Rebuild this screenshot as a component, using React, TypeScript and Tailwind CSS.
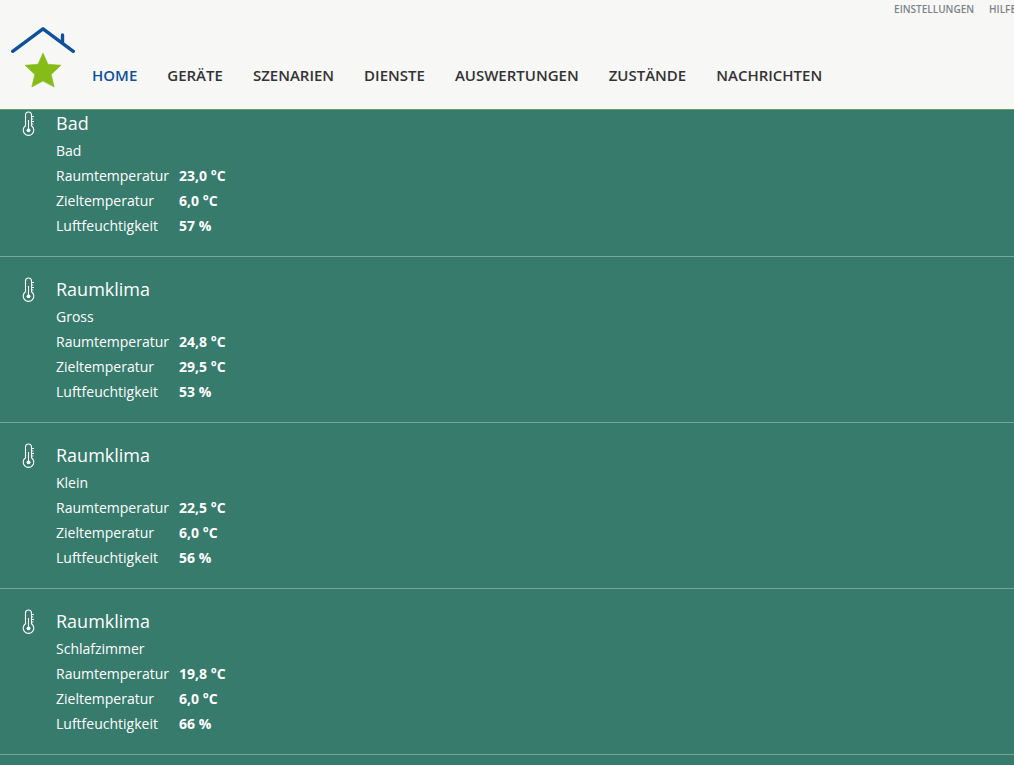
interface Room {
  id: string
  title: string
  room: string
  temperature: string
  target: string
  humidity: string
}

const navItems = [
  'Home',
  'Geräte',
  'Szenarien',
  'Dienste',
  'Auswertungen',
  'Zustände',
  'Nachrichten',
]

const rooms: Room[] = [
  { id: 'bad', title: 'Bad', room: 'Bad', temperature: '23,0 °C', target: '6,0 °C', humidity: '57 %' },
  { id: 'gross', title: 'Raumklima', room: 'Gross', temperature: '24,8 °C', target: '29,5 °C', humidity: '53 %' },
  { id: 'klein', title: 'Raumklima', room: 'Klein', temperature: '22,5 °C', target: '6,0 °C', humidity: '56 %' },
  { id: 'schlafzimmer', title: 'Raumklima', room: 'Schlafzimmer', temperature: '19,8 °C', target: '6,0 °C', humidity: '66 %' },
]

function Logo() {
  return (
    <svg width="64" height="62" viewBox="0 0 64 62" aria-hidden="true">
      <path
        d="M1.700 25.300 32 2.800l30.300 22.500M51.500 9v8"
        fill="none"
        stroke="#0f509b"
        strokeWidth="3.400"
        strokeLinecap="round"
        strokeLinejoin="round"
      />
      <path
        d="M32 27 37 38.300 50 39.200 40.200 48.500 43.200 61 32 55 20.800 61 23.800 48.500 14 39.200 27 38.300z"
        fill="#86bc17"
        stroke="#86bc17"
        strokeWidth=".6"
        strokeLinejoin="round"
      />
    </svg>
  )
}

function Thermometer() {
  return (
    <svg width="14" height="26" viewBox="0 0 14 26" fill="none" stroke="#fff" aria-hidden="true">
      <path d="M3.500 14.700V4a3 3 0 0 1 6 0v10.700a5.300 5.300 0 1 1-6 0z" strokeWidth="1.100" />
      <path d="M6.500 9v9" strokeWidth="1.100" />
      <circle cx="6.500" cy="19.300" r="1.900" fill="#fff" stroke="none" />
      <path d="M9.500 5.500H12M9.500 8h1.800M9.500 10.500H12M9.500 13h1.800" strokeWidth="1" />
    </svg>
  )
}

function RoomRow({ room }: { room: Room }) {
  const values = [
    ['Raumtemperatur', room.temperature],
    ['Zieltemperatur', room.target],
    ['Luftfeuchtigkeit', room.humidity],
  ]

  return (
    <li className="flex border-b border-[#76a698] pt-[17px] pb-[18px]">
      <div className="w-14 shrink-0 pt-[3px] pl-[22px]">
        <Thermometer />
      </div>
      <div>
        <h2 className="text-[18px] leading-[30px] font-medium">{room.title}</h2>
        <p className="text-[14px] leading-[25px] font-medium">{room.room}</p>
        <table className="text-left text-[14px] leading-[25px]">
          <tbody>
            {values.map(([label, value]) => (
              <tr key={label}>
                <th scope="row" className="w-[123px] p-0 font-medium">{label}</th>
                <td className="p-0 font-bold">{value}</td>
              </tr>
            ))}
          </tbody>
        </table>
      </div>
    </li>
  )
}

export default function App() {
  return (
    <div className="min-h-screen overflow-x-hidden bg-[#367b6b] font-['Open_Sans',sans-serif] text-white">
      <header className="relative z-10 border-b border-[#6a9a6c] bg-[#f7f7f6]">
        {/* Last link runs past the right edge */}
        <div className="-mr-0.5 flex h-[18px] justify-end gap-[15px] text-[10px] leading-[18px] font-semibold text-[#7c8388] uppercase">
          <a href="#einstellungen">Einstellungen</a>
          <a href="#hilfe">Hilfe</a>
        </div>
        <div className="flex h-[91px] items-start pl-[11px]">
          <a href="#home" aria-label="Home" className="mr-[17px] shrink-0 pt-2">
            <Logo />
          </a>
          <nav className="flex gap-[30px] pt-[47px] text-[15px] leading-[20px] font-semibold text-[#333] uppercase">
            {navItems.map((item, index) => (
              <a key={item} href={`#${item.toLowerCase()}`} className={index === 0 ? 'text-[#0f509b]' : ''}>
                {item}
              </a>
            ))}
          </nav>
        </div>
      </header>

      {/* The list is scrolled slightly beneath the header */}
      <ul className="-mt-[19px]">
        {rooms.map((room) => (
          <RoomRow key={room.id} room={room} />
        ))}
      </ul>
    </div>
  )
}
